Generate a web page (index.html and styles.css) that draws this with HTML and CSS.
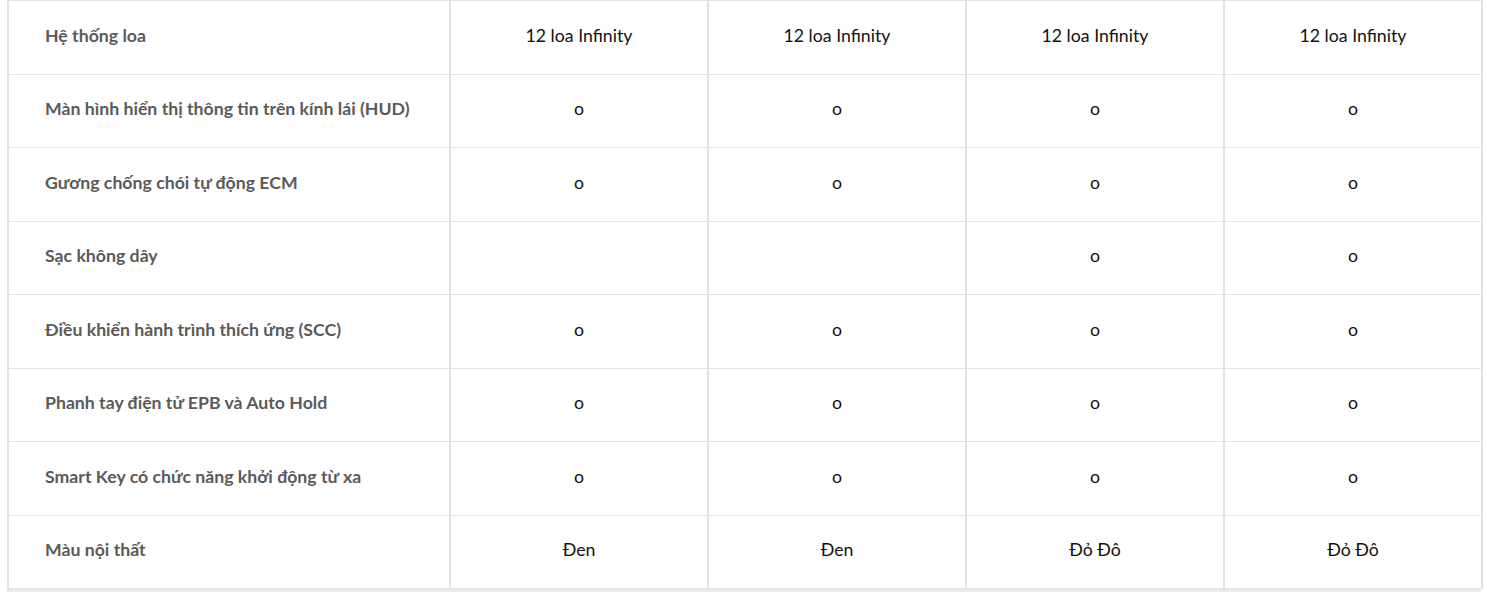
FILE: index.html
```html
<!DOCTYPE html>
<html lang="vi">
<head>
<meta charset="utf-8">
<link rel="stylesheet" href="styles.css">
</head>
<body>
<div class="wrap">
<table class="spec">
<colgroup>
<col class="c-label"><col class="c-val"><col class="c-val"><col class="c-val"><col class="c-val">
</colgroup>
<tbody>
<tr><th>Hệ thống loa</th><td>12 loa Infinity</td><td>12 loa Infinity</td><td>12 loa Infinity</td><td>12 loa Infinity</td></tr>
<tr><th>Màn hình hiển thị thông tin trên kính lái (HUD)</th><td>o</td><td>o</td><td>o</td><td>o</td></tr>
<tr><th>Gương chống chói tự động ECM</th><td>o</td><td>o</td><td>o</td><td>o</td></tr>
<tr><th>Sạc không dây</th><td></td><td></td><td>o</td><td>o</td></tr>
<tr><th>Điều khiển hành trình thích ứng (SCC)</th><td>o</td><td>o</td><td>o</td><td>o</td></tr>
<tr><th>Phanh tay điện tử EPB và Auto Hold</th><td>o</td><td>o</td><td>o</td><td>o</td></tr>
<tr><th>Smart Key có chức năng khởi động từ xa</th><td>o</td><td>o</td><td>o</td><td>o</td></tr>
<tr><th>Màu nội thất</th><td>Đen</td><td>Đen</td><td>Đỏ Đô</td><td>Đỏ Đô</td></tr>
</tbody>
</table>
<div class="band"></div>
</div>
</body>
</html>
```
FILE: styles.css
```css
html, body {
  margin: 0;
  padding: 0;
  background: #ffffff;
}
.wrap {
  padding-left: 7px;
  width: 1475px;
}
.spec {
  border-collapse: collapse;
  width: 1475px;
  table-layout: fixed;
  font-family: Lato, "Noto Sans", sans-serif;
  font-size: 17.7px;
}
.c-label { width: 442px; }
.c-val { width: 258px; }
.spec th, .spec td {
  border-top: 1px solid #e3e3e3;
  border-bottom: 1px solid #e3e3e3;
  border-left: 2px solid #e3e3e3;
  border-right: 2px solid #e3e3e3;
  height: 73.5px;
  padding: 0 0 4px 0;
  box-sizing: border-box;
  vertical-align: middle;
}
.spec th {
  text-align: left;
  padding-left: 36px;
  font-weight: 700;
  color: #5a5a5a;
}
.spec td {
  text-align: center;
  font-weight: 400;
  color: #111111;
}
.band {
  height: 4px;
  background: #ebebeb;
  width: 1474px;
}
```
